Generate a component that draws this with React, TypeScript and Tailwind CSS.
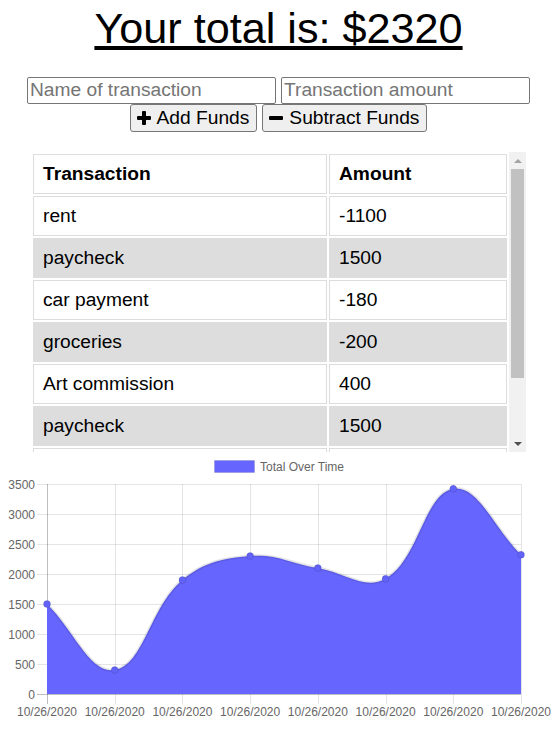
import React from "react";

const values = [1500, 400, 1900, 2300, 2100, 1920, 3420, 2320];
const L = 47, R = 521, T = 32, B = 242;
const xs = values.map((_, i) => L + (i * (R - L)) / (values.length - 1));
const ys = values.map((v) => B - (v * (B - T)) / 3500);

type P = { x: number; y: number };
function controls() {
  const pts: P[] = xs.map((x, i) => ({ x, y: ys[i] }));
  const cps = pts.map((cur, i) => {
    const prev = pts[Math.max(0, i - 1)];
    const next = pts[Math.min(pts.length - 1, i + 1)];
    const d01 = Math.hypot(cur.x - prev.x, cur.y - prev.y);
    const d12 = Math.hypot(next.x - cur.x, next.y - cur.y);
    let s01 = d01 / (d01 + d12);
    let s12 = d12 / (d01 + d12);
    if (isNaN(s01)) s01 = 0;
    if (isNaN(s12)) s12 = 0;
    const fa = 0.4 * s01, fb = 0.4 * s12;
    const cap = (p: P): P => ({
      x: Math.min(R, Math.max(L, p.x)),
      y: Math.min(B, Math.max(T, p.y)),
    });
    return {
      prev: cap({ x: cur.x - fa * (next.x - prev.x), y: cur.y - fa * (next.y - prev.y) }),
      next: cap({ x: cur.x + fb * (next.x - prev.x), y: cur.y + fb * (next.y - prev.y) }),
    };
  });
  let d = `M ${pts[0].x} ${pts[0].y}`;
  for (let i = 1; i < pts.length; i++) {
    const a = cps[i - 1].next, b = cps[i].prev, p = pts[i];
    d += ` C ${a.x} ${a.y} ${b.x} ${b.y} ${p.x} ${p.y}`;
  }
  return d;
}
const curve = controls();
const area = `${curve} L ${R} ${B} L ${L} ${B} Z`;

const rows: [string, string][] = [
  ["rent", "-1100"],
  ["paycheck", "1500"],
  ["car payment", "-180"],
  ["groceries", "-200"],
  ["Art commission", "400"],
  ["paycheck", "1500"],
  ["rent", "-1100"],
  ["paycheck", "1500"],
];

function Chart() {
  const ticks = [0, 500, 1000, 1500, 2000, 2500, 3000, 3500];
  const font = "'Liberation Sans', Helvetica, Arial, sans-serif";
  return (
    <svg width={557} height={284} className="block" style={{ fontFamily: font }}>
      <rect x={214.5} y={8.5} width={40} height={12} fill="#6666ff" stroke="rgba(0,0,0,0.1)" strokeWidth={1} />
      <text x={260} y={18.5} fontSize={12} fill="#666">Total Over Time</text>
      {ticks.map((t) => {
        const y = Math.round(B - (t * (B - T)) / 3500) + 0.5;
        return (
          <g key={t}>
            <line x1={37} x2={R} y1={y} y2={y} stroke={t === 0 ? "rgba(0,0,0,0.25)" : "rgba(0,0,0,0.1)"} />
            <text x={35} y={y + 4} fontSize={12} fill="#666" textAnchor="end">{t}</text>
          </g>
        );
      })}
      {xs.map((x, i) => {
        const xx = Math.round(x) + 0.5;
        return (
          <g key={i}>
            <line x1={xx} x2={xx} y1={T} y2={B + 10} stroke={i === 0 ? "rgba(0,0,0,0.25)" : "rgba(0,0,0,0.1)"} />
            <text x={x} y={264} fontSize={12} fill="#666" textAnchor="middle">10/26/2020</text>
          </g>
        );
      })}
      <path d={area} fill="#6666ff" />
      <path d={curve} fill="none" stroke="rgba(0,0,0,0.1)" strokeWidth={3} />
      {xs.map((x, i) => (
        <circle key={i} cx={x} cy={ys[i]} r={3.5} fill="#6262f8" stroke="rgba(0,0,0,0.1)" strokeWidth={1} />
      ))}
    </svg>
  );
}

function Plus() {
  return (
    <svg width={14} height={14} viewBox="0 0 14 14" className="block">
      <rect x={5} y={0} width={4} height={14} rx={1} fill="#000" />
      <rect x={0} y={5} width={14} height={4} rx={1} fill="#000" />
    </svg>
  );
}
function Minus() {
  return (
    <svg width={14} height={14} viewBox="0 0 14 14" className="block">
      <rect x={0} y={5} width={14} height={4} rx={1} fill="#000" />
    </svg>
  );
}

export default function App() {
  return (
    <div className="w-[557px] h-[737px] overflow-hidden bg-white text-black font-['Liberation_Sans',Arial,sans-serif]">
      <h1 className="mt-[4px] text-center text-[43.2px] leading-[normal] underline">Your total is: $2320</h1>
      <div className="mt-[24px] flex justify-center gap-[5px]">
        <input
          className="w-[249px] h-[27px] border border-[#767676] rounded-[2px] px-[2px] text-[19.2px] placeholder:text-[#757575] outline-none"
          placeholder="Name of transaction"
        />
        <input
          className="w-[249px] h-[27px] border border-[#767676] rounded-[2px] px-[2px] text-[19.2px] placeholder:text-[#757575] outline-none"
          placeholder="Transaction amount"
        />
      </div>
      <div className="flex justify-center gap-[5px]">
        <button className="h-[28px] flex items-center gap-[6px] pl-[6px] pr-[7px] bg-[#efefef] border border-[#767676] rounded-[3px] text-[19.2px]">
          <Plus />
          <span>Add Funds</span>
        </button>
        <button className="h-[28px] flex items-center gap-[6px] pl-[6px] pr-[7px] bg-[#efefef] border border-[#767676] rounded-[3px] text-[19.2px]">
          <Minus />
          <span>Subtract Funds</span>
        </button>
      </div>
      <div className="mt-[20px] mx-auto w-[495px] h-[300px] flex">
        <div className="w-[478px] h-[300px] overflow-hidden">
          <table className="w-[478px] border-separate border-spacing-[2px] text-[19.2px]">
            <thead>
              <tr>
                <th className="w-[294px] h-[40px] border border-[#dddddd] pl-[9px] text-left font-bold">Transaction</th>
                <th className="h-[40px] border border-[#dddddd] pl-[9px] text-left font-bold">Amount</th>
              </tr>
            </thead>
            <tbody>
              {rows.map(([n, a], i) => (
                <tr key={i} className={i % 2 === 1 ? "bg-[#dddddd]" : ""}>
                  <td className="h-[40px] border border-[#dddddd] pl-[9px]">{n}</td>
                  <td className="h-[40px] border border-[#dddddd] pl-[9px]">{a}</td>
                </tr>
              ))}
            </tbody>
          </table>
        </div>
        <div className="w-[17px] h-[300px] bg-[#f1f1f1] flex flex-col items-center">
          <div className="h-[17px] flex items-center justify-center">
            <div className="w-0 h-0 border-l-[4px] border-r-[4px] border-b-[4px] border-l-transparent border-r-transparent border-b-[#a3a3a3]" />
          </div>
          <div className="w-[13px] h-[209px] bg-[#c1c1c1]" />
          <div className="flex-1" />
          <div className="h-[17px] flex items-center justify-center">
            <div className="w-0 h-0 border-l-[4px] border-r-[4px] border-t-[4px] border-l-transparent border-r-transparent border-t-[#505050]" />
          </div>
        </div>
      </div>
      <Chart />
    </div>
  );
}
